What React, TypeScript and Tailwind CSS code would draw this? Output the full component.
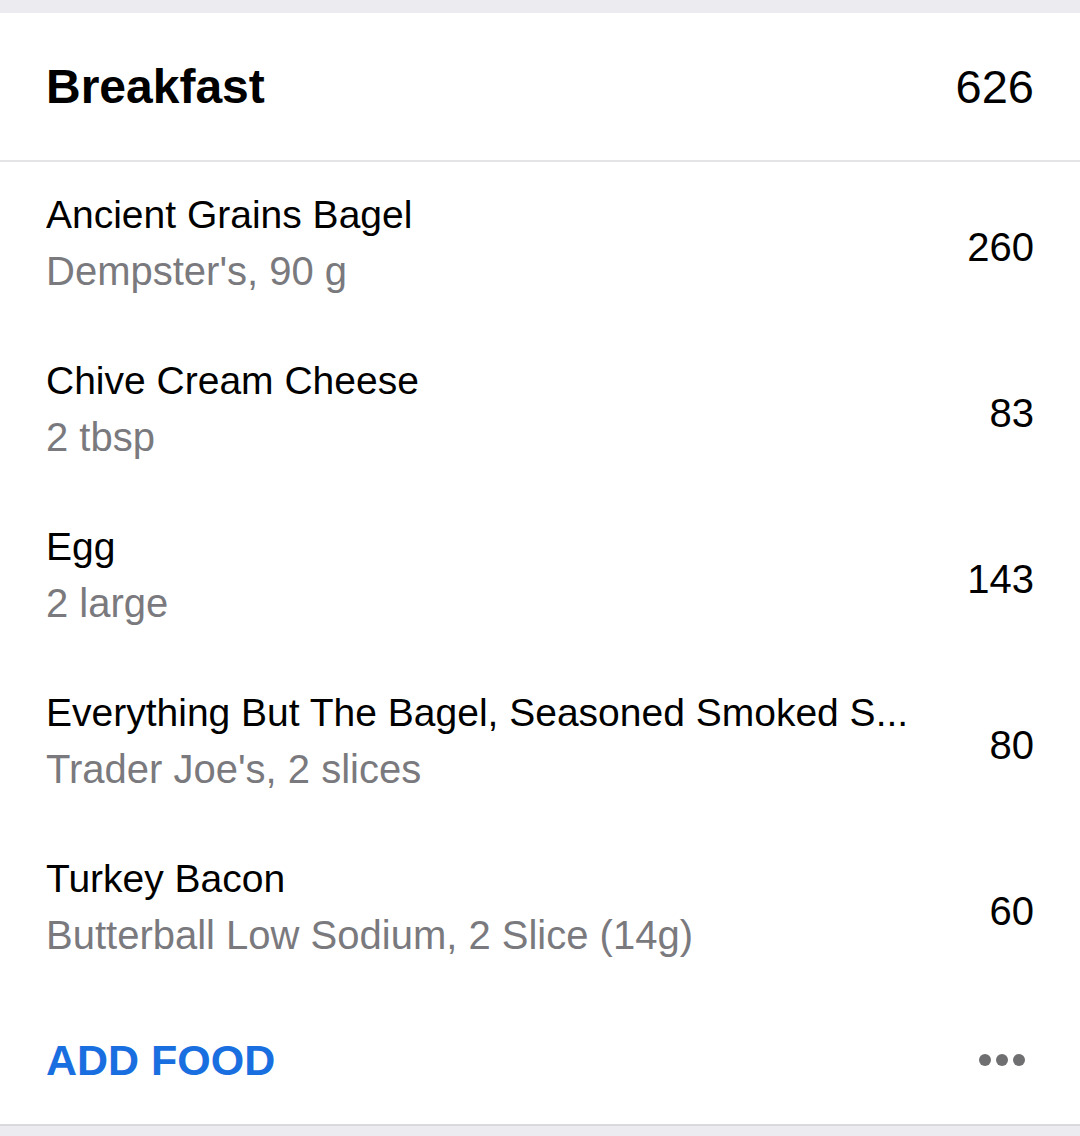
import React from "react";

const items = [
  { name: "Ancient Grains Bagel", detail: "Dempster's, 90 g", cal: 260 },
  { name: "Chive Cream Cheese", detail: "2 tbsp", cal: 83 },
  { name: "Egg", detail: "2 large", cal: 143 },
  {
    name: "Everything But The Bagel, Seasoned Smoked S...",
    detail: "Trader Joe's, 2 slices",
    cal: 80,
  },
  { name: "Turkey Bacon", detail: "Butterball Low Sodium, 2 Slice (14g)", cal: 60 },
];

export default function App() {
  return (
    <main
      className="min-h-screen bg-[#ebebf0] pt-[13px]"
      style={{ fontFamily: '"Liberation Sans", Arial, sans-serif' }}
    >
      <section className="bg-white border-b-2 border-[#d9d9de]">
        <header className="h-[149px] flex items-center justify-between px-[46px] border-b-2 border-[#e4e4e6]">
          <h1 className="text-[48px] font-bold text-black leading-none">Breakfast</h1>
          <span className="text-[47px] text-black leading-none">626</span>
        </header>

        {items.map((it) => (
          <div
            key={it.name}
            className="h-[166px] flex items-center justify-between gap-6 px-[46px]"
          >
            <div className="min-w-0 flex-1 pb-[4px]">
              <div className="text-[39px] leading-[56px] text-black truncate">{it.name}</div>
              <div className="text-[40px] leading-[56px] text-[#7a7a7e] truncate">
                {it.detail}
              </div>
            </div>
            <span className="text-[40px] leading-none text-black mt-[4px]">{it.cal}</span>
          </div>
        ))}

        <div className="h-[132px] flex items-center justify-between px-[46px] pt-[4px]">
          <button className="text-[43px] font-bold text-[#1a6fe0] leading-none">ADD FOOD</button>
          <div className="flex gap-[5px] mr-[9px]">
            <span className="w-[12px] h-[12px] rounded-full bg-[#6f6f72]" />
            <span className="w-[12px] h-[12px] rounded-full bg-[#6f6f72]" />
            <span className="w-[12px] h-[12px] rounded-full bg-[#6f6f72]" />
          </div>
        </div>
      </section>
    </main>
  );
}
